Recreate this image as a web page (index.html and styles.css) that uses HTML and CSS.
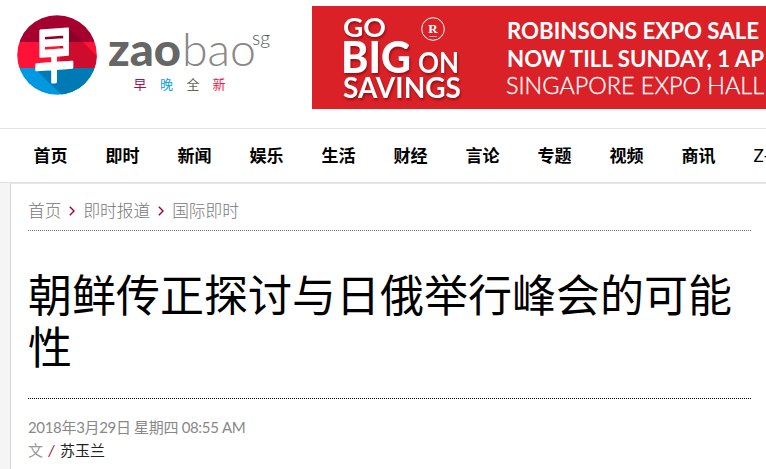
FILE: index.html
```html
<!DOCTYPE html>
<html lang="zh-Hans">
<head>
  <meta charset="utf-8">
  <title>朝鲜传正探讨与日俄举行峰会的可能性 | 早报</title>
  <link rel="stylesheet" href="styles.css">
</head>
<body>
  <header class="header">
    <svg class="logo" width="290" height="110" viewBox="0 0 290 110">
      <defs>
        <clipPath id="circle"><circle cx="57" cy="55" r="39.8"/></clipPath>
      </defs>
      <g clip-path="url(#circle)">
        <rect x="17" y="15" width="80" height="27" fill="#a5002f"/>
        <rect x="17" y="42" width="80" height="26" fill="#ff1238"/>
        <rect x="17" y="68" width="80" height="28" fill="#0099e0"/>
        <!-- long shadow -->
        <path d="M71 30L83 42H48L43 37z" fill="#8e0028"/>
        <path d="M70 42H83L109 68H60V42z" fill="#cf0c2e"/>
        <path d="M34 68H109V110H77z" fill="#007ab5"/>
      </g>
      <text class="logo-mark" transform="translate(34.500 78.500) rotate(-4) skewX(-4) scale(.86 1.28)">早</text>
      <text class="logo-zao" x="108" y="66" textLength="73" lengthAdjust="spacingAndGlyphs">zao</text>
      <text class="logo-bao" x="182" y="66" textLength="74" lengthAdjust="spacingAndGlyphs">bao</text>
      <text class="logo-sg" x="252" y="44.500" textLength="18" lengthAdjust="spacingAndGlyphs">sg</text>
      <g class="logo-slogan">
        <text x="133.500" y="89" fill="#a5114b">早</text>
        <text x="160" y="89" fill="#0b9ee0">晚</text>
        <text x="186.500" y="89" fill="#666655">全</text>
        <text x="212.500" y="89" fill="#f0163f">新</text>
      </g>
    </svg>
    <svg class="banner" width="454" height="103" viewBox="0 0 454 103">
      <rect width="454" height="103" fill="#da2128"/>
      <g class="banner-big">
        <text x="31" y="31" font-size="27" textLength="43" lengthAdjust="spacingAndGlyphs">GO</text>
        <text x="29" y="66.500" font-size="43" font-weight="900" textLength="70" lengthAdjust="spacingAndGlyphs">BIG</text>
        <text x="106" y="66.500" font-size="28" textLength="41" lengthAdjust="spacingAndGlyphs">ON</text>
        <text x="31" y="92" font-size="29" textLength="118" lengthAdjust="spacingAndGlyphs">SAVINGS</text>
      </g>
      <circle cx="121" cy="23" r="11.300" fill="none" stroke="#fff" stroke-width="1"/>
      <text class="banner-r" x="121" y="26.500">R</text>
      <path d="M117 30.500h8" stroke="#fff" stroke-width=".6"/>
      <g class="banner-info">
        <text x="195" y="33" textLength="252" lengthAdjust="spacingAndGlyphs">ROBINSONS EXPO SALE</text>
        <text x="195" y="60.500" textLength="257" lengthAdjust="spacingAndGlyphs">NOW TILL SUNDAY, 1 AP</text>
        <text class="light" x="194" y="87.500" textLength="258" lengthAdjust="spacingAndGlyphs">SINGAPORE EXPO HALL</text>
      </g>
    </svg>
  </header>

  <nav class="nav">
    <a>首页</a>
    <a>即时</a>
    <a>新闻</a>
    <a>娱乐</a>
    <a>生活</a>
    <a>财经</a>
    <a>言论</a>
    <a>专题</a>
    <a>视频</a>
    <a>商讯</a>
    <a class="en">Z-World</a>
  </nav>

  <main class="content">
    <div class="breadcrumb">
      <a>首页</a>
      <svg width="6" height="10" viewBox="0 0 6 10"><path d="M.8.800L5 5L.8 9.200"/></svg>
      <a>即时报道</a>
      <svg width="6" height="10" viewBox="0 0 6 10"><path d="M.8.800L5 5L.8 9.200"/></svg>
      <a>国际即时</a>
    </div>
    <h1 class="title">朝鲜传正探讨与日俄举行峰会的可能性</h1>
    <div class="meta">
      <div class="date">2018年3月29日 星期四 08:55 AM</div>
      <div class="byline">文 <i>/</i> <a>苏玉兰</a></div>
    </div>
  </main>
</body>
</html>
```

FILE: styles.css
```css
* {box-sizing: border-box;}
body {margin: 0; height: 469px; overflow: hidden; background: #f5f5f5; font-family: Lato, "Noto Sans CJK SC", sans-serif;}

.header {display: flex; height: 128px; background: #fff; overflow: hidden;}
.logo {flex: none; margin-right: 22px;}
.banner {flex: none; margin-top: 6px;}
.logo-mark {font: 500 46px "Noto Sans CJK SC", sans-serif; fill: #fff; stroke: #fff; stroke-width: 2.2; stroke-linejoin: round;}
.logo-zao {font-size: 45px; font-weight: 900; fill: #666;}
.logo-bao {font-size: 45px; font-weight: 300; fill: #888;}
.logo-sg {font-size: 19px; font-weight: 300; fill: #555;}
.logo-slogan {font-size: 13px;}

.banner-big {fill: #fff; font-weight: 700; filter: drop-shadow(1px 2px 1px rgba(80, 0, 0, .5));}
.banner-r {font: 700 13px "Liberation Serif", serif; fill: #fff; text-anchor: middle;}
.banner-info {font-size: 22.5px; font-weight: 700; fill: #fff;}
.banner-info .light {font-weight: 300; stroke: #fff; stroke-width: .3;}

.nav {display: flex; gap: 38px; height: 55px; padding-left: 33.5px; overflow: hidden; background: #fff; border-top: 1px solid #e2e2e2; border-bottom: 1px solid #dedede; font-size: 17px; font-weight: 700; line-height: 53px; color: #000; white-space: nowrap;}
.nav a {flex: none;}
.nav .en {font-weight: 400;}

.content {height: 286px; margin-left: 10px; padding: 0 15px 0 17px; background: #fff; border-left: 1px solid #d8d8d8; border-top: 1px solid #e8e8e8;}
.breadcrumb {display: flex; align-items: center; gap: 8.5px; height: 47px; padding-top: 8px; border-bottom: 1px dotted #777; font-size: 16.7px; font-weight: 300; line-height: 24px; color: #777;}
.breadcrumb svg {flex: none; margin: 0 0 0 -1px; fill: none; stroke: #a5002f; stroke-width: 1.4;}
.title {height: 168px; margin: 0; padding-top: 38px; border-bottom: 1px dotted #000; font-size: 44px; font-weight: 400; line-height: 52px; color: #000;}
.meta {padding-top: 17px; font-size: 15px; line-height: 23px; color: #888;}
.date {letter-spacing: -.33px;}
.byline {color: #999; word-spacing: 1.5px;}
.byline i {color: #a5002f;}
.byline a {color: #222;}
```
